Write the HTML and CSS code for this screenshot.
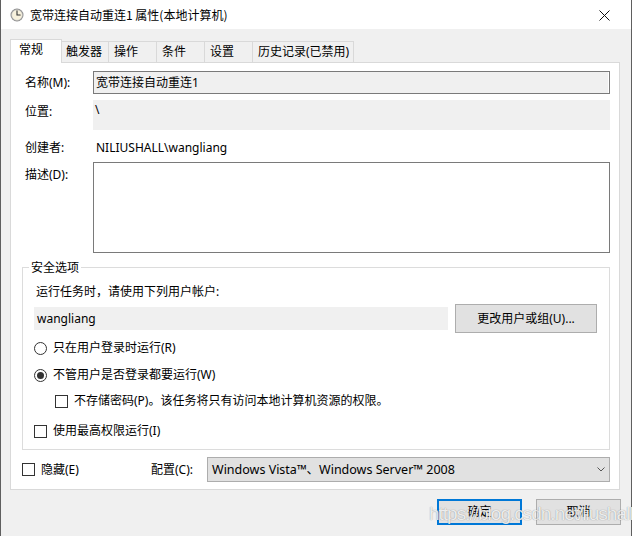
FILE: index.html
```html
<!DOCTYPE html>
<html lang="zh-CN">
<head>
    <meta charset="UTF-8">
    <title>宽带连接自动重连1 属性(本地计算机)</title>
    <link rel="stylesheet" href="styles.css">
</head>
<body>
    <div class="window">
        <div class="titlebar">
            <svg class="title-icon" width="14" height="14" viewBox="0 0 14 14">
                <circle cx="7" cy="7" r="6.5" fill="#8c8c8c"/>
                <circle cx="7" cy="7" r="5.3" fill="#f7f1dc"/>
                <circle cx="7" cy="7" r="5.3" fill="none" stroke="#c9c9c9" stroke-width="0.6"/>
                <path d="M7 2.8V7h3.2" fill="none" stroke="#333" stroke-width="1.1" stroke-linecap="round"/>
            </svg>
            <span class="title-text">宽带连接自动重连1 属性(本地计算机)</span>
            <span class="close">
                <svg width="11" height="11" viewBox="0 0 11 11">
                    <path d="M0.5 0.5L10.5 10.5M10.5 0.5L0.5 10.5" stroke="#111" stroke-width="1"/>
                </svg>
            </span>
        </div>

        <div class="tabs">
            <div class="tab tab-active">常规</div>
            <div class="tab">触发器</div>
            <div class="tab">操作</div>
            <div class="tab">条件</div>
            <div class="tab">设置</div>
            <div class="tab tab-last">历史记录(已禁用)</div>
        </div>

        <div class="panel">
            <div class="field field-center">
                <div class="label">名称(M):</div>
                <div class="textbox">宽带连接自动重连1</div>
            </div>
            <div class="field field-location">
                <div class="label label-top">位置:</div>
                <div class="readonly-box">\</div>
            </div>
            <div class="field field-author">
                <div class="label">创建者:</div>
                <div class="value">NILIUSHALL\wangliang</div>
            </div>
            <div class="field field-desc">
                <div class="label label-desc">描述(D):</div>
                <div class="textarea"></div>
            </div>

            <div class="group">
                <div class="legend">安全选项</div>
                <div class="group-hint">运行任务时，请使用下列用户帐户:</div>
                <div class="account-row">
                    <div class="account-box">wangliang</div>
                    <div class="button button-wide">更改用户或组(U)...</div>
                </div>
                <div class="option option-first">
                    <span class="radio"></span>
                    <span>只在用户登录时运行(R)</span>
                </div>
                <div class="option option-second">
                    <span class="radio radio-checked"></span>
                    <span>不管用户是否登录都要运行(W)</span>
                </div>
                <div class="option option-nested">
                    <span class="checkbox"></span>
                    <span>不存储密码(P)。该任务将只有访问本地计算机资源的权限。</span>
                </div>
                <div class="option option-last">
                    <span class="checkbox"></span>
                    <span>使用最高权限运行(I)</span>
                </div>
            </div>

            <div class="bottom-row">
                <div class="option option-hidden">
                    <span class="checkbox"></span>
                    <span>隐藏(E)</span>
                </div>
                <div class="config-label">配置(C):</div>
                <div class="combobox">
                    <span>Windows Vista™、Windows Server™ 2008</span>
                    <svg class="chevron" width="8" height="5" viewBox="0 0 8 5">
                        <path d="M0.5 0.5L4 4L7.5 0.5" fill="none" stroke="#555" stroke-width="1"/>
                    </svg>
                </div>
            </div>
        </div>

        <div class="dialog-buttons">
            <div class="button button-default">确定</div>
            <div class="button">取消</div>
        </div>

        <div class="watermark">https://blog.csdn.net/liushall</div>
    </div>
</body>
</html>
```

FILE: styles.css
```css
body {
    margin: 0;
    width: 632px;
    height: 536px;
    overflow: hidden;
    background: #f0f0f0;
    font-family: "Noto Sans", "Noto Sans CJK SC", sans-serif;
    font-size: 12px;
    line-height: 16px;
    color: #000;
}
.window {
    position: relative;
    height: 536px;
    box-sizing: border-box;
    border-left: 1px solid #5f5f5f;
    border-right: 1px solid #5f5f5f;
}
.titlebar {
    height: 29px;
    background: #fff;
    display: flex;
    align-items: center;
    padding-left: 9px;
}
.title-icon {
    margin-right: 6px;
}
.title-text {
    font-family: "Noto Sans CJK SC", sans-serif;
}
.close {
    margin-left: auto;
    width: 32px;
    display: flex;
    align-items: center;
    justify-content: flex-start;
    padding-top: 1px;
}
.tabs {
    display: flex;
    align-items: flex-end;
    height: 23px;
    padding: 10px 0 0 11px;
}
.tab {
    box-sizing: border-box;
    min-width: 48px;
    height: 21px;
    padding: 0 5px;
    line-height: 20px;
    background: #f0f0f0;
    border-top: 1px solid #d9d9d9;
    border-left: 1px solid #d9d9d9;
    white-space: nowrap;
}
.tab-last {
    padding: 0 4px 0 5px;
    border-right: 1px solid #d9d9d9;
}
.tab-active {
    position: relative;
    z-index: 1;
    min-width: 52px;
    height: 24px;
    margin: 0 -2px -1px -2px;
    padding: 0 8px;
    background: #fff;
    border-right: 1px solid #d9d9d9;
}
.panel {
    box-sizing: border-box;
    height: 428px;
    margin: 0 11px 0 9px;
    padding: 8px 9px 0 11px;
    background: #fff;
    border: 1px solid #d9d9d9;
}
.field {
    display: flex;
}
.field-center {
    align-items: center;
}
.label {
    width: 68px;
    margin-left: 3px;
    flex-shrink: 0;
}
.label-top {
    padding-top: 4px;
}
.label-desc {
    padding-top: 5px;
}
.textbox {
    flex: 1;
    box-sizing: border-box;
    height: 23px;
    padding: 0 2px;
    line-height: 21px;
    background: #f0f0f0;
    border: 1px solid #7a7a7a;
    box-shadow: inset -1px 0 0 #fff;
}
.field-location {
    margin-top: 6px;
}
.readonly-box {
    flex: 1;
    height: 30px;
    box-sizing: border-box;
    padding: 2px 2px 0;
    background: #f0f0f0;
}
.field-author {
    margin-top: 10px;
}
.value {
    padding-left: 3px;
}
.field-desc {
    margin-top: 6px;
}
.textarea {
    flex: 1;
    box-sizing: border-box;
    height: 91px;
    background: #fff;
    border: 1px solid #7a7a7a;
}
.group {
    margin-top: 14px;
    padding: 0 11px 10px;
    border: 1px solid #dcdcdc;
}
.legend {
    width: fit-content;
    margin: -8px 0 0 -5px;
    padding: 0 2px;
    background: #fff;
}
.group-hint {
    margin: 8px 0 0 2px;
}
.account-row {
    display: flex;
    align-items: center;
    margin-top: 4px;
    height: 29px;
}
.account-box {
    width: 414px;
    box-sizing: border-box;
    height: 23px;
    padding-left: 3px;
    line-height: 23px;
    background: #f0f0f0;
}
.button {
    box-sizing: border-box;
    width: 85px;
    height: 26px;
    line-height: 24px;
    text-align: center;
    background: #e1e1e1;
    border: 1px solid #adadad;
}
.button-wide {
    width: 142px;
    height: 29px;
    line-height: 27px;
    margin-left: 7px;
}
.button-default {
    border: 2px solid #0078d7;
    line-height: 22px;
}
.option {
    display: flex;
    align-items: center;
    gap: 6px;
}
.option-first {
    margin-top: 7px;
}
.option-second {
    margin-top: 11px;
}
.option-nested {
    margin: 10px 0 0 21px;
}
.option-last {
    margin-top: 14px;
}
.radio {
    box-sizing: border-box;
    width: 13px;
    height: 13px;
    border: 1px solid #333;
    border-radius: 50%;
    background: #fff;
    display: flex;
    align-items: center;
    justify-content: center;
}
.radio-checked::after {
    content: "";
    width: 7px;
    height: 7px;
    border-radius: 50%;
    background: #333;
}
.checkbox {
    box-sizing: border-box;
    width: 13px;
    height: 13px;
    border: 1px solid #333;
    background: #fff;
}
.bottom-row {
    display: flex;
    align-items: center;
    margin-top: 7px;
}
.option-hidden {
    width: 129px;
}
.config-label {
    width: 56px;
}
.combobox {
    flex: 1;
    box-sizing: border-box;
    height: 25px;
    display: flex;
    align-items: center;
    padding: 0 4px;
    background: #e1e1e1;
    border: 1px solid #adadad;
    font-size: 12.5px;
}
.chevron {
    margin-left: auto;
}
.dialog-buttons {
    display: flex;
    justify-content: flex-end;
    gap: 14px;
    margin: 9px 10px 0 0;
}
.watermark {
    position: absolute;
    left: 428px;
    top: 503px;
    font-family: "Liberation Sans", sans-serif;
    font-size: 19px;
    line-height: 22px;
    letter-spacing: -1px;
    color: rgba(255, 255, 255, 0.85);
    text-shadow: 0 0 1px rgba(0, 0, 0, 0.45);
}
```
